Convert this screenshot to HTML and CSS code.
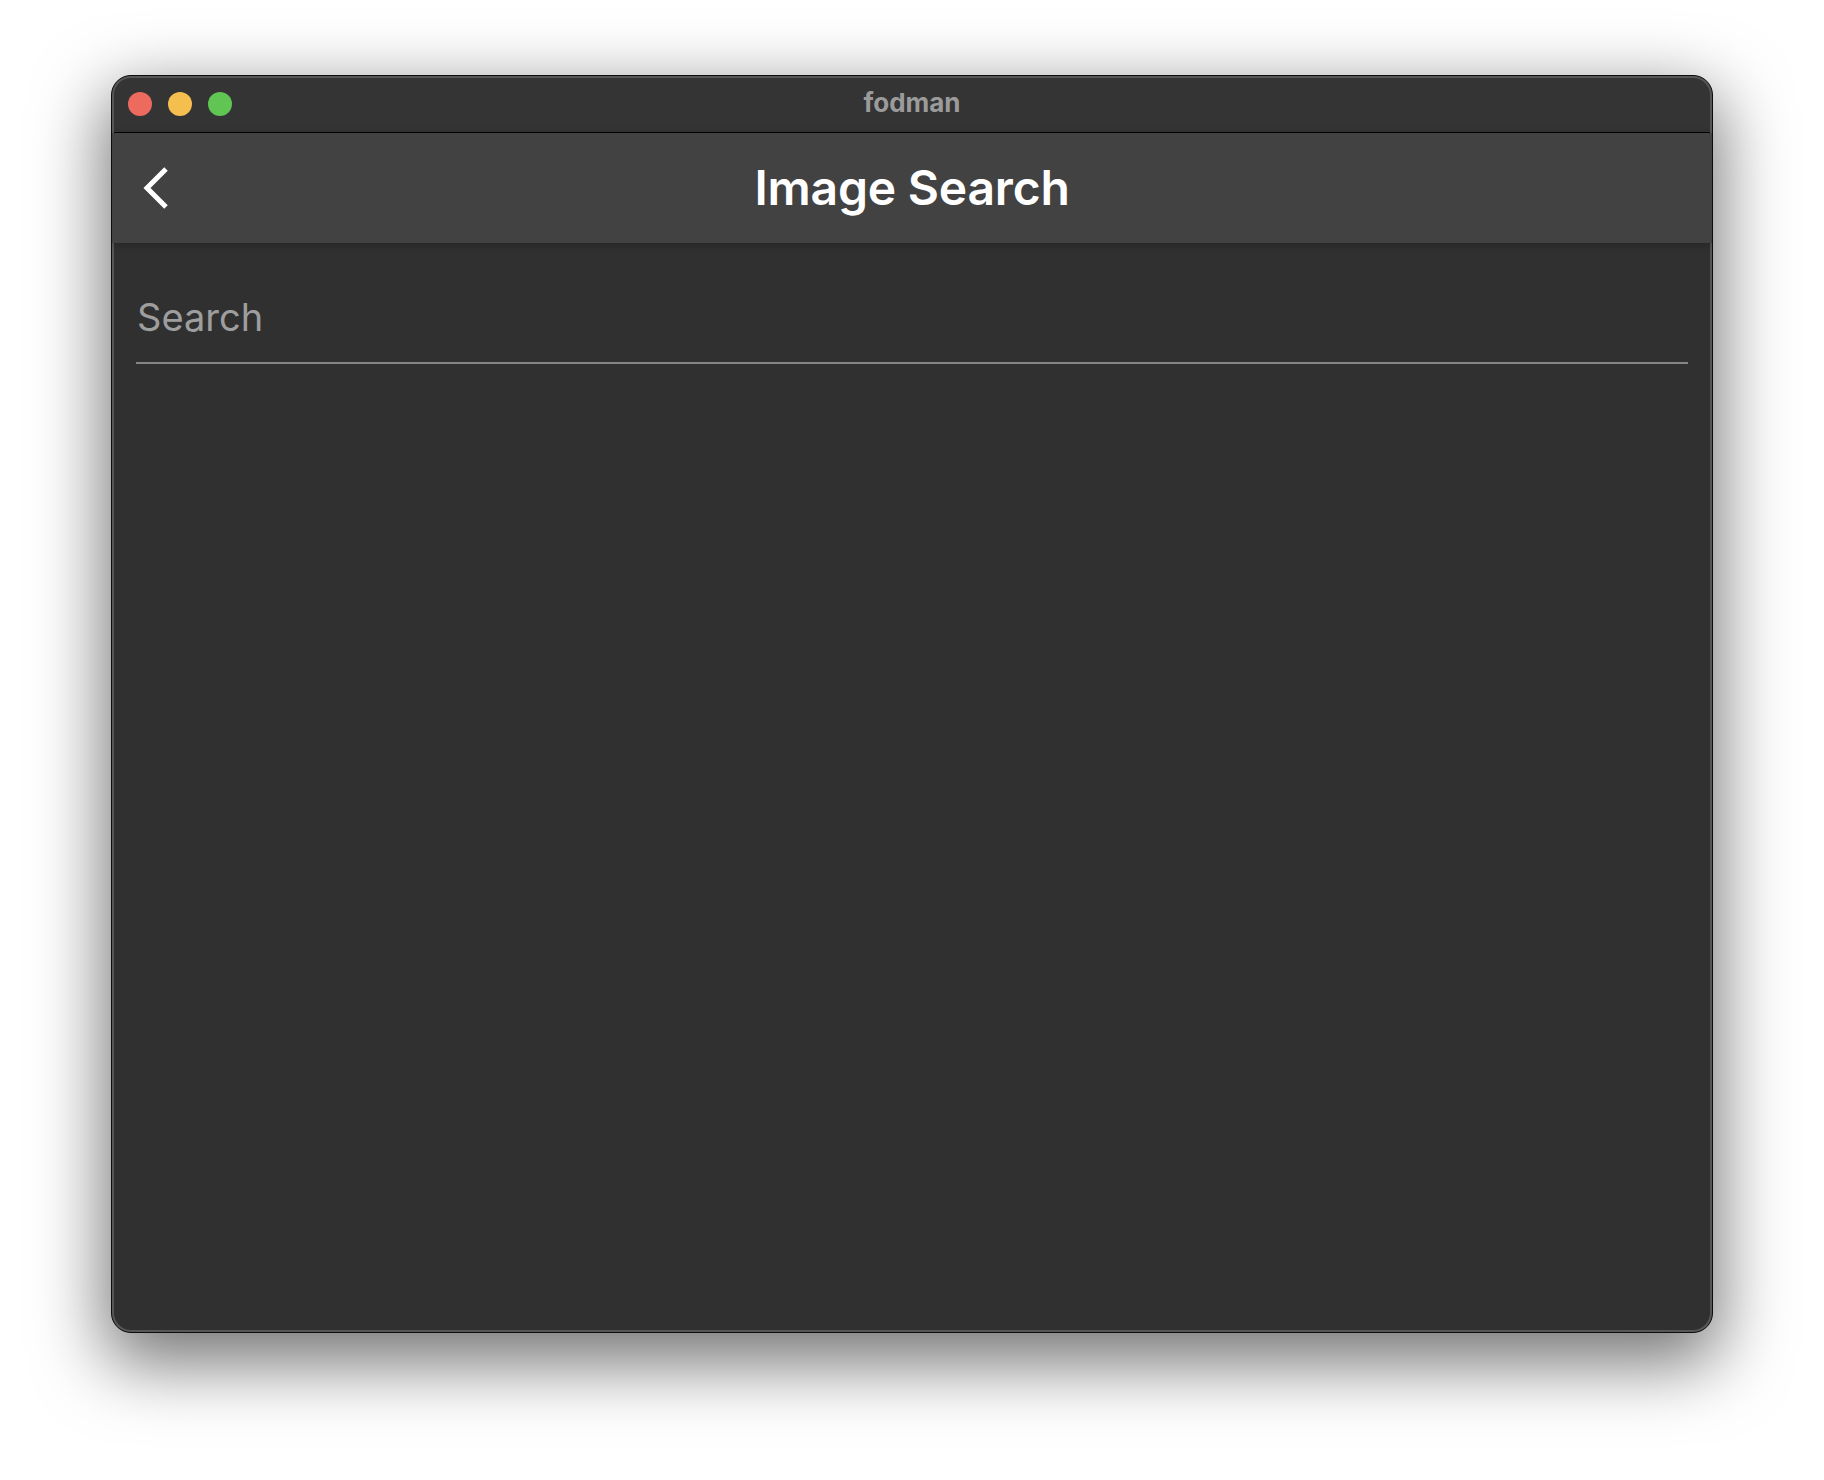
FILE: index.html
```html
<!DOCTYPE html>
<html lang="en">
<head>
<meta charset="utf-8">
<title>fodman</title>
<link rel="stylesheet" href="styles.css">
</head>
<body>
<div class="window">
  <div class="titlebar">
    <div class="lights">
      <span class="light red"></span>
      <span class="light yellow"></span>
      <span class="light green"></span>
    </div>
    <div class="wtitle">fodman</div>
    <div class="spacer"></div>
  </div>
  <div class="appbar">
    <div class="back">
      <svg width="40" height="48" viewBox="0 0 40 48" aria-hidden="true">
        <polyline points="28,5 9,24 28,43" fill="none" stroke="#ffffff" stroke-width="5" stroke-linecap="butt" stroke-linejoin="miter"/>
      </svg>
    </div>
    <h1 class="title">Image Search</h1>
    <div class="spacer"></div>
  </div>
  <div class="content">
    <div class="field">
      <div class="placeholder">Search</div>
    </div>
  </div>
</div>
</body>
</html>
```

FILE: styles.css
```css
html, body {
  margin: 0;
  padding: 0;
  background: #ffffff;
}
body {
  width: 1824px;
  height: 1480px;
  padding: 75px 0 0 111px;
  box-sizing: border-box;
  font-family: Inter, "Noto Sans", sans-serif;
}
.window {
  width: 1602px;
  height: 1258px;
  box-sizing: border-box;
  border: 1px solid #0c0c0c;
  border-radius: 20px;
  overflow: hidden;
  display: flex;
  flex-direction: column;
  background: #303030;
  box-shadow: 0 24px 70px 6px rgba(0, 0, 0, 0.55);
  position: relative;
}
.window::after {
  content: "";
  position: absolute;
  inset: 0;
  border-radius: 19px;
  box-shadow: inset 0 0 0 2px #575757;
  pointer-events: none;
}
.titlebar {
  height: 56px;
  flex: none;
  background: #343434;
  border-bottom: 1px solid #000000;
  display: grid;
  grid-template-columns: 1fr auto 1fr;
  align-items: center;
}
.lights {
  display: flex;
  gap: 16px;
  padding-left: 16px;
}
.light {
  width: 24px;
  height: 24px;
  border-radius: 50%;
  display: block;
}
.red { background: #ed6a5e; }
.yellow { background: #f5bf4f; }
.green { background: #61c554; }
.wtitle {
  font-size: 26px;
  font-weight: 700;
  color: #9b9b9b;
  line-height: 56px;
  padding-bottom: 2px;
  box-sizing: border-box;
  height: 56px;
  margin-top: -3px;
}
.appbar {
  height: 110px;
  flex: none;
  background: #424242;
  display: grid;
  grid-template-columns: 1fr auto 1fr;
  align-items: center;
  position: relative;
  z-index: 1;
  box-shadow: 0 2px 8px rgba(0, 0, 0, 0.25);
}
.back {
  padding-left: 26px;
  display: flex;
  align-items: center;
  height: 48px;
}
.back svg { display: block; }
.title {
  margin: 0;
  font-size: 48px;
  font-weight: 560;
  color: #ffffff;
  line-height: 62px;
  letter-spacing: -0.2px;
}
.content {
  flex: 1;
  padding: 0 24px;
  background: #303030;
}
.field {
  padding: 51px 0 22px 1px;
  border-bottom: 2px solid #858585;
}
.placeholder {
  font-size: 38px;
  line-height: 46px;
  color: #9e9e9e;
}
```
